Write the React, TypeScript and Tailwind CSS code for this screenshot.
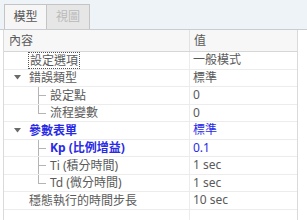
import React from 'react'

type Row = {
  label: string
  value: string
  level: 0 | 1
  toggle?: boolean
  branch?: 'mid' | 'end'
  blue?: boolean
  bold?: boolean
  focus?: boolean
}

const rows: Row[] = [
  { label: '設定選項', value: '一般模式', level: 0, focus: true },
  { label: '錯誤類型', value: '標準', level: 0, toggle: true },
  { label: '設定點', value: '0', level: 1, branch: 'mid' },
  { label: '流程變數', value: '0', level: 1, branch: 'end' },
  { label: '參數表單', value: '標準', level: 0, toggle: true, blue: true, bold: true },
  { label: 'Kp (比例增益)', value: '0.1', level: 1, branch: 'mid', blue: true, bold: true },
  { label: 'Ti (積分時間)', value: '1 sec', level: 1, branch: 'mid' },
  { label: 'Td (微分時間)', value: '1 sec', level: 1, branch: 'end' },
  { label: '穩態執行的時間步長', value: '10 sec', level: 0 },
]

function Branch({ kind }: { kind: 'mid' | 'end' }) {
  return (
    <div className="relative w-[10px] h-full shrink-0 ml-[34px]">
      <div
        className={`absolute left-0 top-0 w-px bg-[#b4b4b4] ${kind === 'mid' ? 'h-full' : 'h-1/2'}`}
      />
      <div className="absolute left-0 top-1/2 h-px w-[8px] bg-[#b4b4b4]" />
    </div>
  )
}

export default function App() {
  return (
    <div
      className="w-[307px] h-[220px] overflow-hidden bg-white text-[12px] text-[#5a5a5a]"
      style={{ fontFamily: '"Noto Sans", "Noto Sans CJK TC", sans-serif' }}
    >
      <div className="h-[30px] bg-[#eef3f8] flex items-end pl-[4px] border-b border-[#c9cdd2]">
        <div className="h-[25px] w-[43px] flex items-center justify-center bg-[#f6f6f6] border border-b-0 border-[#c4c4c4] text-[#555]">
          模型
        </div>
        <div className="h-[25px] w-[43px] flex items-center justify-center bg-[#e6e6e6] border border-l-0 border-b-0 border-[#c4c4c4] text-[#b9b9b9]">
          視圖
        </div>
      </div>
      <div className="ml-[3px] w-[295px] border-l border-r border-[#dadada]">
        <div className="h-[22px] flex bg-[#f7f7f7] border-b border-[#d6d6d6]">
          <div className="w-[186px] pl-[5px] flex items-center border-r border-[#e2e2e2]">內容</div>
          <div className="flex-1 pl-[4px] flex items-center">值</div>
        </div>
        {rows.map((r, i) => (
          <div key={i} className="h-[17.5px] flex border-b border-[#ececec]">
            <div className="w-[186px] flex items-center border-r border-[#ececec] h-full">
              {r.level === 0 ? (
                <div className="w-[25px] flex items-center justify-center shrink-0">
                  {r.toggle && (
                    <svg width="7" height="5" viewBox="0 0 7 5" className="ml-[2px]">
                      <path d="M0 0 L7 0 L3.5 4.5 Z" fill="#6a6a6a" />
                    </svg>
                  )}
                </div>
              ) : (
                <Branch kind={r.branch!} />
              )}
              <span
                className={`whitespace-nowrap leading-[15px] ${r.level === 1 ? 'ml-[2px]' : ''} ${
                  r.blue ? 'text-[#2a2ae6]' : ''
                } ${r.bold ? 'font-bold' : ''} ${
                  r.focus ? 'border border-dotted border-[#555] px-[1px] -ml-[1px]' : ''
                }`}
              >
                {r.label}
              </span>
            </div>
            <div
              className={`flex-1 pl-[3px] flex items-center whitespace-nowrap ${r.blue ? 'text-[#2a2ae6]' : ''}`}
            >
              {r.value}
            </div>
          </div>
        ))}
        <div className="h-[20px] flex">
          <div className="w-[186px] border-r border-[#ececec]" />
        </div>
      </div>
    </div>
  )
}
